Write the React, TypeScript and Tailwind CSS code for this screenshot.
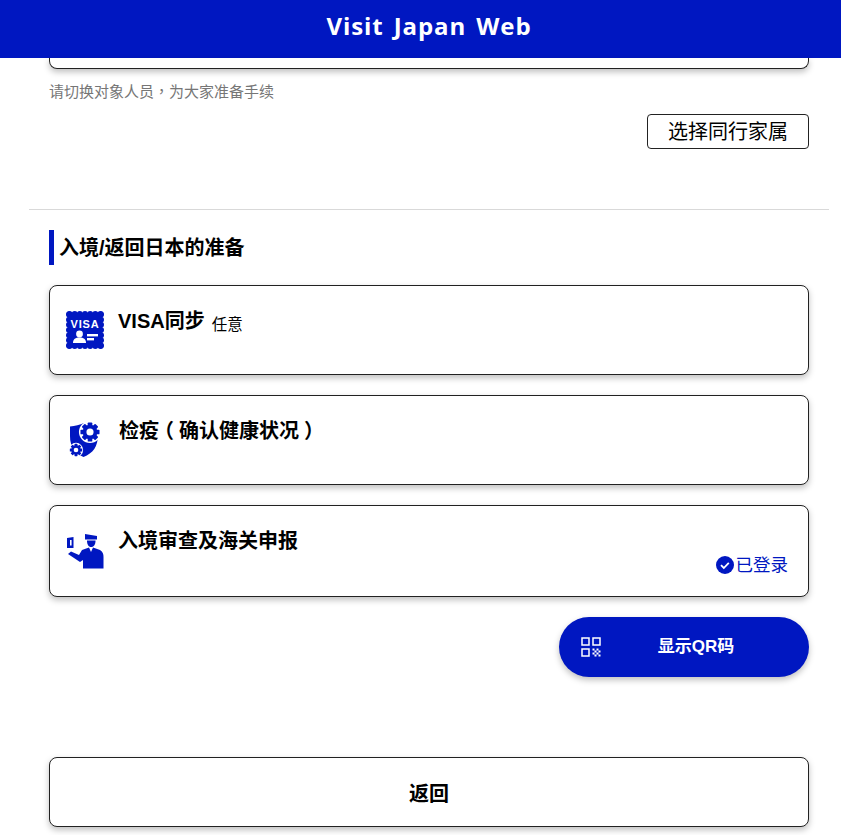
const cjk = "font-['Liberation_Sans','Noto_Sans_CJK_SC',sans-serif]";
const tc = "font-['Noto_Sans_CJK_TC',sans-serif]";
const paren = "inline-block w-5 text-center [font-feature-settings:'halt']";

function VisaIcon() {
  const bumps = [];
  for (let i = 0; i < 7; i++) {
    const p = 3.5 + i * 5.166;
    bumps.push(<circle key={`t${i}`} cx={p} cy={3} r={3} />);
    bumps.push(<circle key={`b${i}`} cx={p} cy={35} r={3} />);
    bumps.push(<circle key={`l${i}`} cx={3} cy={p} r={3} />);
    bumps.push(<circle key={`r${i}`} cx={35} cy={p} r={3} />);
  }
  return (
    <svg width="38" height="38" viewBox="0 0 38 38" fill="#0017c1" className="mt-px">
      {bumps}
      <rect x="2" y="2" width="34" height="34" />
      <text x="19" y="16.500" textAnchor="middle" fontFamily="Liberation Sans" fontWeight="700" fontSize="11" letterSpacing="0.8" fill="#fff">
        VISA
      </text>
      <circle cx="13.500" cy="23" r="3.400" fill="#fff" />
      <path d="M7 32c0-4 2.500-5.500 6.500-5.500s6.500 1.500 6.500 5.500z" fill="#fff" />
      <rect x="21" y="23" width="11" height="2.400" fill="#fff" />
      <rect x="21" y="27" width="7" height="2.400" fill="#fff" />
    </svg>
  );
}

function Gear({ cx, cy, r }: { cx: number; cy: number; r: number }) {
  const teeth = [0, 45, 90, 135];
  return (
    <g>
      <circle cx={cx} cy={cy} r={r * 1.3} fill="#fff" />
      {teeth.map((a) => (
        <rect
          key={a}
          x={cx - r * 0.27}
          y={cy - r * 1.12}
          width={r * 0.54}
          height={r * 2.24}
          rx={r * 0.1}
          fill="#0017c1"
          transform={`rotate(${a} ${cx} ${cy})`}
        />
      ))}
      <circle cx={cx} cy={cy} r={r * 0.86} fill="#0017c1" />
      <circle cx={cx} cy={cy} r={r * 0.42} fill="#fff" />
    </g>
  );
}

function HealthIcon() {
  return (
    <svg width="36" height="38" viewBox="0 0 36 38">
      <path d="M1 6.500 C6 6 11 5 15 3 L29 14 C29 27 24 33 14.500 37 C6 33 1 27 1 16z" fill="#0017c1" />
      <Gear cx={21} cy={12} r={8.500} />
      <Gear cx={7} cy={30} r={5.500} />
    </svg>
  );
}

function OfficerIcon() {
  return (
    <svg width="38" height="36" viewBox="0 0 38 36" fill="#0017c1">
      <path d="M1 4 L7.500 3 V14 L1 14z" />
      <rect x="4" y="6" width="1.600" height="5.500" fill="#fff" />
      <path d="M19 0 L31 2 V5.500 H19z" />
      <path d="M21 6.500 H29.500 C29.500 10.500 28 13 25 13 C22.500 13 21 10.500 21 6.500z" />
      <path d="M2 20 L5 17.500 L13 21 L16 16 L23 13.500 L25 18 L27 13.500 L34 16 C37 18 37.500 20 37.500 23 V34.500 H17 V26 L14 28z" />
    </svg>
  );
}

function QrIcon() {
  return (
    <svg width="20" height="20" viewBox="0 0 20 20" fill="none" stroke="#fff" strokeWidth="1.500">
      <rect x="1" y="1" width="7" height="7" />
      <rect x="12" y="1" width="7" height="7" />
      <rect x="1" y="12" width="7" height="7" />
      <path d="M11.500 11.500h2v2h-2zM15.500 11.500h2v2h-2zM13.500 13.500h2v2h-2zM17.500 13.500h2v2h-2zM11.500 15.500h2v2h-2zM15.500 15.500h2v2h-2zM13.500 17.500h2v2h-2zM17.500 17.500h2v2h-2z" stroke="none" fill="#fff" />
    </svg>
  );
}

function CheckBadge() {
  return (
    <svg width="18" height="18" viewBox="0 0 18 18">
      <circle cx="9" cy="9" r="9" fill="#0017c1" />
      <path d="M5 9.200l2.800 2.800 5-5.200" fill="none" stroke="#fff" strokeWidth="1.800" />
    </svg>
  );
}

const cardClass =
  "flex bg-white border border-[#222] rounded-lg shadow-[0_3px_6px_rgba(0,0,0,0.25)] ml-[49px] mr-[32px]";

export default function App() {
  return (
    <div className={`h-[835px] overflow-hidden bg-white text-black ${cjk}`}>
      {/* Header */}
      <header className="h-[58px] bg-[#0017c1] flex justify-center pl-[17px] pt-2">
        <h1 className="font-['Open_Sans',sans-serif] font-bold text-2xl leading-[36px] tracking-[0.9px] [word-spacing:3px] text-white">
          Visit Japan Web
        </h1>
      </header>

      {/* Scrolled card */}
      <div className="h-[11px] ml-[49px] mr-[32px] border border-t-0 border-[#222] rounded-b-lg shadow-[0_3px_6px_rgba(0,0,0,0.25)]" />
      <p className="mt-[11px] ml-[49px] text-[15px] leading-[22px] text-[#767676]">
        请切换对象人员<span className={tc}>，</span>为大家准备手续
      </p>

      <div className="flex justify-end mr-[32px] mt-[11px]">
        <button className="w-[162px] h-[35px] border border-[#222] rounded text-xl leading-none">
          选择同行家属
        </button>
      </div>

      <div className="mt-[60px] ml-[29px] mr-[12px] border-t border-[#d9d9d9]" />

      {/* Section */}
      <h2 className="mt-5 ml-[49px] pl-[5px] h-[35px] border-l-[5px] border-[#0017c1] flex items-center text-xl font-bold">
        入境/返回日本的准备
      </h2>

      <div className="mt-5 flex flex-col gap-5">
        <div className={`${cardClass} h-[90px] pl-4 pt-6 gap-[14px]`}>
          <VisaIcon />
          <div className="flex items-start">
            <span className="text-xl font-bold leading-[22px]">VISA同步</span>
            <span className="ml-[7px] mt-[3px] text-[15.5px] leading-[24px]">任意</span>
          </div>
        </div>

        <div className={`${cardClass} h-[90px] pl-[19px] pt-6 gap-[14px]`}>
          <HealthIcon />
          <span className="text-xl font-bold leading-[22px]">
            检疫<span className={paren}>（</span>确认健康状况<span className={paren}>）</span>
          </span>
        </div>

        <div className={`${cardClass} h-[92px] pl-4 pt-6 relative`}>
          <div className="mt-[4px] mr-[14px]">
            <OfficerIcon />
          </div>
          <span className="text-xl font-bold leading-[22px]">入境审查及海关申报</span>
          <div className="ml-auto mr-5 mt-[23px] flex items-center gap-[2px] h-[24px] text-[17.5px] text-[#0017c1]">
            <CheckBadge />
            已登录
          </div>
        </div>
      </div>

      <div className="mt-5 flex justify-end mr-[32px]">
        <button className="relative w-[250px] h-[60px] rounded-full bg-[#0017c1] text-white font-bold text-[17px] shadow-[0_3px_6px_rgba(0,0,0,0.25)] flex items-center justify-center pl-[24px]">
          <span className="absolute left-[22px] top-[20px]">
            <QrIcon />
          </span>
          显示QR码
        </button>
      </div>

      <button className={`${cardClass} mt-20 w-[760px] h-[70px] items-center justify-center pt-1 text-xl font-bold`}>
        返回
      </button>
    </div>
  );
}
